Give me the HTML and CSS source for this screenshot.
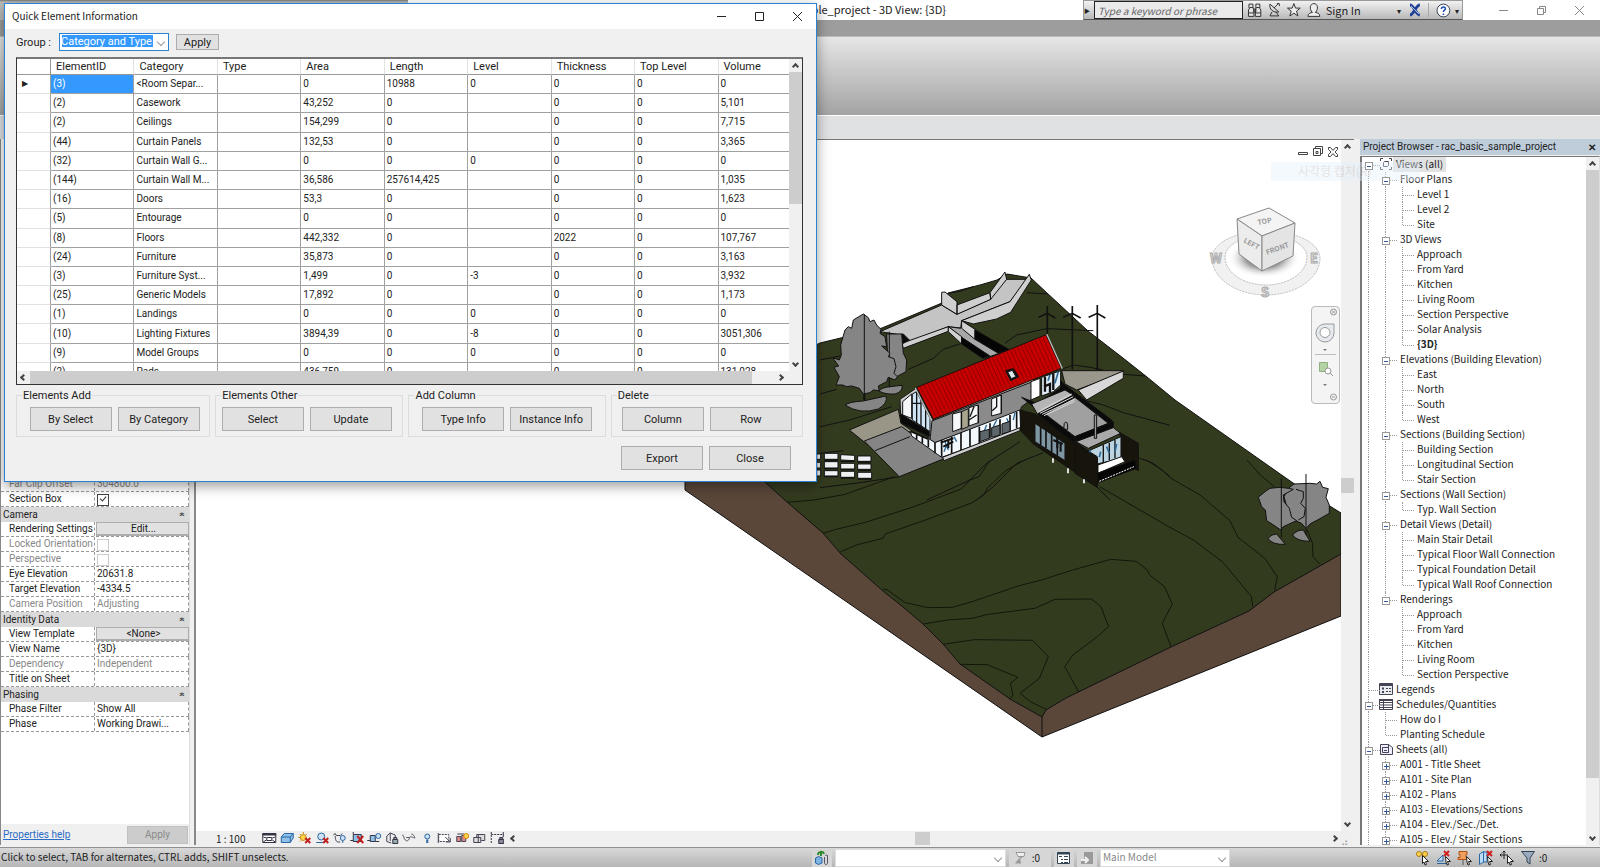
FILE: index.html
```html
<!DOCTYPE html>
<html lang="en">
<head>
  <meta charset="UTF-8" />
  <meta name="viewport" content="width=device-width, initial-scale=1.0"/>
  <title>rac_basic_sample_project - 3D View: {3D}</title>
  <link rel="stylesheet" href="styles.css">
</head>
<body>

  <!-- Application title bar -->
  <header class="titlebar">
    <div class="app-title">rac_basic_sample_project - 3D View: {3D}</div>
    <div class="infocenter">
      <span class="search-arrow">▶</span>
      <input type="text" class="search" placeholder="Type a keyword or phrase" aria-label="Search" />
      <svg width="16" height="16" viewBox="0 0 16 16" fill="#e4e4e4" stroke="#333"><path d="M2 6V2h4v4M9 6V2h4v4M1.500 14.500V8L3 5.500h3L7 8v6.500zM8.500 14.500V8l1-2.500h3L14 8v6.500zM7 7h2v3H7zM1.500 11H7M8.500 11H14"/></svg>
      <svg width="16" height="16" viewBox="0 0 16 16" fill="none" stroke="#333"><path d="M3 2c-1 5 3 9 9 8zM5 10l-2 4h9l-3-4M7 6l4-4M10 1.500h2.500V4"/></svg>
      <svg width="16" height="16" viewBox="0 0 16 16" fill="#eee" stroke="#333"><path d="M8 1.500l1.700 4.600h4.800l-3.800 3 1.400 5L8 11.200l-4.100 2.900 1.400-5-3.800-3h4.800z"/></svg>
      <svg width="16" height="16" viewBox="0 0 16 16" fill="#eee" stroke="#333"><path d="M2 14.500c0-3 2-3.500 4.500-4C3 7 4 1.500 8 1.500S13 7 9.500 10.500c2.500.5 4.500 1 4.500 4z"/></svg>
      <span class="sign-in">Sign In</span>
      <span class="caret">▾</span>
      <svg width="14" height="14" viewBox="0 0 14 14" fill="none" stroke="#1f3f94" stroke-width="3"><path d="M2 2c4 0 6 10 10 10M12 2C8 2 6 12 2 12"/><path d="M3 3l8 8" stroke="#b9d0f0" stroke-width="1"/></svg>
      <span class="divider"></span>
      <svg width="15" height="15" viewBox="0 0 15 15"><circle cx="7.500" cy="7.500" r="6.500" fill="#fff" stroke="#345"/><path d="M5.500 6c0-3 4.500-2.500 4 0-.3 1.200-2 1.300-2 3M7.500 10.500v1.500" fill="none" stroke="#1f4fb4" stroke-width="1.600"/></svg>
      <span class="caret">▾</span>
    </div>
    <div class="window-buttons">
      <button aria-label="Minimize"><svg width="11" height="11" viewBox="0 0 11 11"><path d="M1 5.500h9"/></svg></button>
      <button aria-label="Restore"><svg width="11" height="11" viewBox="0 0 11 11"><path d="M1.500 3.500h6v6h-6zM3.500 3.500v-2h6v6h-2"/></svg></button>
      <button aria-label="Close"><svg width="11" height="11" viewBox="0 0 11 11"><path d="M1 1l9 9M10 1l-9 9"/></svg></button>
    </div>
  </header>
  <div class="ribbon-tabs"></div>
  <div class="ribbon-panel"></div>
  <div class="options-bar"></div>

  <main class="workspace">

    <!-- Properties palette -->
    <aside class="properties">
      <div class="properties-head"></div>
      <div class="prop-row dim"><span>Far Clip Offset</span><span>304800.0</span></div>
      <div class="prop-row"><label for="sectionBox">Section Box</label><span><input type="checkbox" id="sectionBox" checked /></span></div>
      <div class="prop-group">Camera<span class="fold">»</span></div>
      <div class="prop-row"><span>Rendering Settings</span><button class="prop-btn">Edit...</button></div>
      <div class="prop-row dim"><label for="locked">Locked Orientation</label><span><input type="checkbox" id="locked" disabled /></span></div>
      <div class="prop-row dim"><label for="perspective">Perspective</label><span><input type="checkbox" id="perspective" disabled /></span></div>
      <div class="prop-row"><span>Eye Elevation</span><span>20631.8</span></div>
      <div class="prop-row"><span>Target Elevation</span><span>-4334.5</span></div>
      <div class="prop-row dim"><span>Camera Position</span><span>Adjusting</span></div>
      <div class="prop-group">Identity Data<span class="fold">»</span></div>
      <div class="prop-row"><span>View Template</span><button class="prop-btn">&lt;None&gt;</button></div>
      <div class="prop-row"><span>View Name</span><span>{3D}</span></div>
      <div class="prop-row dim"><span>Dependency</span><span>Independent</span></div>
      <div class="prop-row"><span>Title on Sheet</span><span></span></div>
      <div class="prop-group">Phasing<span class="fold">»</span></div>
      <div class="prop-row"><span>Phase Filter</span><span>Show All</span></div>
      <div class="prop-row"><span>Phase</span><span>Working Drawi...</span></div>
      <div class="properties-foot">
        <a href="#">Properties help</a>
        <button disabled>Apply</button>
      </div>
    </aside>

    <!-- 3D view -->
    <section class="view">
      <div class="view-main">
        <div class="canvas">
          <svg class="model" viewBox="196 140 1145 691" preserveAspectRatio="xMaxYMid slice">
            <!-- soil and ground -->
            <g stroke="#111" stroke-width="1">
              <path fill="#5a473a" d="M685 470V490L1042 737L1341 616V540L1042 700L760 470z"/>
              <path d="M1042 715V737"/>
              <path fill="#333b1f" d="M700 400L820 343L882 328L942 303L948 293L980 285L997 280L1007 274L1031 278L1047 293L1073 317L1088 331L1123 358L1147 377L1175 400L1293 483L1341 513V554L1274 592L1249 611L1171 647L1066 698L1046 710L1042 717L1010 699L960 664L943 644L923 624L903 607L883 591L841 554L823 533L787 502L765 482z"/>
            </g>
            <g class="contour" transform="translate(680 460) scale(.4464 .3333)">
              <path d="M240 127L300 120L370 103L480 50M320 220L350 208L415 187L520 142L630 87L650 60L670 50L695 0M360 275L395 255L455 235L460 222L550 180L655 128L680 105L690 82L730 32L772 0"/>
              <path d="M455 387L465 390L503 427L555 443L610 442L650 427L760 377L810 360L880 330L965 298L1022 304L1047 330L1052 345L1085 380L1103 432L1080 490L1100 560"/>
              <path d="M545 492L600 480L655 475L690 463L795 445L840 418L922 417L943 440L960 500L935 530L880 585L862 620L893 696"/>
              <path d="M590 553L660 539L790 541L825 590L805 655L762 700L785 725L820 748M628 613L688 614L757 652L740 670L746 705L740 716"/>
              <path d="M940 80L1095 200L1150 240L1215 305L1240 345L1280 410L1283 440M1045 0L1080 30L1100 55L1165 105L1232 182L1250 232L1310 295L1338 350L1332 392M1270 0L1300 45L1335 85M1405 210L1417 250L1418 290L1433 312"/>
            </g>

            <!-- house, roads and trees -->
            <g class="house" transform="translate(820 260) scale(.3333)">
              <path d="M0 300L60 288M0 402L50 388M0 500L90 480L215 440M0 580L70 572M265 328L340 295L370 268L425 250M555 250L590 225L680 206L820 212M790 420L850 435L910 458L1050 496M955 593L1000 610L1050 650M0 683L120 668L240 650M320 720L450 660L500 610L600 545M470 720L520 680L590 610L670 578M620 98L680 102M725 328L760 315L810 322L850 330M910 343L975 348M830 680L870 720M385 100L420 94L460 80"/>
              <path fill="#c4c4c4" d="M180 215L365 135L410 163L512 118L512 100L560 58L622 58L570 125L425 182L430 205L385 200L248 255L245 225z"/>
              <path fill="#cfcfcf" d="M365 97L375 96L411 125V163L365 135zM411 135L510 98L512 118L411 163zM510 98L555 36L560 58L512 118zM570 125L628 43L634 60L572 157L530 177L460 192L425 182zM245 250L385 200V214L250 265z"/>
              <path fill="#a8a8a8" d="M385 200L425 232L495 295L560 272L465 208L425 182L422 205z"/>
              <path fill="#d0d0d0" d="M385 200L425 230V252L385 215zM425 182L465 208V238L425 205z"/>
              <path fill="#050505" d="M425 232L510 288L488 295L425 252zM465 210L570 270L535 280L465 238z"/>
              <path fill="#0a0a0a" d="M220 225L250 222L268 240L250 250L225 238z"/>

              <path fill="#858585" d="M200 222L245 222L250 280L260 300L258 335L230 350L205 340zM177 393Q185 382 210 380L246 376Q250 395 225 402Q195 404 177 393M75 435Q90 425 130 423L198 408Q205 430 175 447Q120 465 75 435"/>
              <path d="M208 215V382" />
              <path fill="#858585" d="M130 162L145 173L150 185L162 180L170 195L183 208L180 220L195 230L200 260L185 258L210 280L205 290L222 296L228 320L222 340L232 350L225 360L205 352L200 365L175 378L178 392L160 390L150 398L130 402L118 385L95 378L80 380L68 375L48 375L58 350L42 322L56 318L38 293L58 300L64 285L62 255L75 210L85 200L95 205L100 180z"/>
              <path d="M133 163V420"/>
              <path stroke-width="6" d="M133 404V420"/>

              <path fill="#999687" d="M88 510L235 448L243 490L275 512L165 572z"/>
              <path fill="#858585" d="M133 543L245 500L375 595L238 650z"/>
              <path d="M165 572L270 530"/>

              <path fill="#eef0f2" d="M-10 582H2V598H-10zM13 580H54V598H13zM62 584L104 586V602L62 600zM113 588H153V604H113zM-10 607H2V624H-10zM13 605H54V624H13zM62 610H104V627H62zM113 612H153V628H113zM-10 630H2V648H-10zM13 632H54V648H13zM62 634H104V652H62zM113 637H155V655H113z"/>
              <path stroke-width="4" d="M13 600H54M62 604H104M113 606H153M13 626H54M62 629H104M113 631H153M13 650H54M62 654H104M113 657H155"/>

              <path fill="#9a988c" d="M725 332L910 332L890 345L770 390L735 372z"/>
              <path fill="#d8d8d8" d="M775 390L910 333V355L800 420z"/>

              <!-- gable end -->
              <path fill="#c9c9c9" d="M240 418L288 385L338 478V548L325 530L243 488z"/>
              <path fill="#f4f6f7" d="M248 425L275 402V475L248 465z"/>
              <path fill="#cfe4f4" d="M277 402L290 395L330 475V515L277 480z"/>
              <path stroke-width="4" d="M290 395V490M303 415V500M317 440V508M277 430H305"/>
              <path fill="#0a0a0a" d="M243 462L328 515V530L243 488z"/>
              <!-- roof -->
              <path fill="#c60000" d="M290 382L678 224L724 325L340 478z"/>
              <path stroke="#7a0000" d="M300 378L351 474M311 373L361 470M322 369L372 465M333 364L382 461M344 360L393 457M355 355L403 453M365 351L414 449M376 346L424 445M387 342L435 441M398 338L446 437M408 334L457 432M419 329L467 428M430 325L478 424M441 320L488 420M451 316L499 416M462 312L510 411M473 308L521 407M484 303L531 402M494 299L542 398M505 294L552 394M516 290L563 390M527 286L574 385M537 282L585 381M548 277L595 377M559 273L606 373M570 268L617 368M580 264L627 364M591 259L638 360M602 255L649 356M613 251L659 351M623 247L670 347M634 242L681 342M645 238L692 338M656 233L702 334M667 229L713 330"/>
              <path fill="none" stroke="#b9b9b9" stroke-width="4" d="M680 222L727 326M640 362L336 484L286 384"/>
              <path fill="#111" d="M557 332L580 326L596 350L572 362z"/>
              <path fill="#dce8ee" d="M563 336L577 331L588 350L574 356z"/>
              <!-- walls -->
              <path fill="#8a8a8a" d="M336 483L635 366V418L605 440L600 455L345 548L330 540z"/>
              <path fill="#f2f8fc" d="M345 548L600 450L605 505L365 592L275 528L272 515L325 535z"/>
              <path stroke-width="5" d="M290 525V538M307 528V550M325 538V562M345 548V580M365 540V590M395 530V580M423 518V570M450 508V560M478 500V550M510 490V535M540 478V522M570 465V515M590 456V505M275 515L325 538"/>
              <path stroke="#2d6a9a" stroke-width="4" d="M375 545L385 570M380 555L372 575M402 530L410 545M500 495L492 515M530 480L520 500M585 458L580 480M560 475L567 490"/>
              <path stroke-width="6" d="M362 548L400 535M370 560L400 545M385 540V565"/>
              <path fill="#5d666b" d="M480 515L508 508V535L480 545zM515 503L540 495V525L515 532zM546 492L570 484V515L546 522z"/>
              <path fill="#f5f7f8" d="M398 462L425 455V505L398 515zM447 443L475 435V488L447 498zM515 417L544 405V460L515 468z"/>
              <path fill="#a9a48d" d="M425 455L445 446V500L425 508z"/>
              <path stroke-width="4" d="M424 455V508M475 435V490M544 405V460M447 480L470 465M462 440L450 470M530 412V440L517 452"/>
              <path fill="#fff" d="M633 365L660 355V408L633 420z"/>
              <path fill="#e2eef5" d="M665 352L722 332V375L700 395L665 408z"/>
              <path stroke-width="7" d="M672 380L690 372L690 398M700 340V390M675 350V395"/>
              <path stroke="#2d6a9a" stroke-width="5" d="M715 335L705 370M690 345L684 362"/>
              <path fill="#d0d0d0" d="M368 592L600 503V512L372 602z"/>

              <!-- lower wing -->
              <path fill="#17140c" d="M600 450L645 462L832 592V682L640 552L602 512z"/>
              <path fill="#0a0a0a" d="M605 412L640 440L655 465L760 545L880 500L875 480L735 375L722 362V385L650 430z"/>
              <path fill="#b5b5b5" d="M635 432L735 390L760 405L652 462z"/>
              <path fill="#a0a0a0" d="M675 462L765 412L865 490L765 530z"/>
              <path stroke="#ddd" d="M655 455L755 402M660 460L760 410M667 463L764 418M672 467L764 424"/>
              <path fill="#0a0a0a" d="M765 530L880 485V500L800 545L770 545z"/>
              <path fill="#aaa" d="M768 545L880 503L902 520L805 565z"/>
              <path fill="#7e96a1" d="M645 490L735 550V602L645 545z"/>
              <path stroke-width="5" d="M662 500V555M678 512V565M695 522V576M712 535V588"/>
              <path stroke-width="6" d="M700 540L728 552M712 530V565M722 545V575"/>
              <path fill="#17140c" d="M900 518L955 550V632L918 610L905 598z"/>
              <path fill="#bcd4e0" d="M805 573L903 530V595L832 612V590z"/>
              <path fill="#fff" d="M834 615L905 590L915 605L834 640z"/>
              <path fill="#050505" d="M832 640L945 600L950 625L835 668z"/>
              <path stroke="#fff" stroke-width="3" stroke-dasharray="6 3" d="M838 664L942 620"/>
              <path stroke-width="4" d="M850 555V608M868 548V600M885 540V595"/>
              <path stroke="#2d6a9a" stroke-width="5" d="M812 570L806 585M842 575L838 592M860 560L868 580M890 552L885 575"/>
              <path fill="#17140c" d="M765 548L832 595V682L765 640z"/>
              <path fill="#999" d="M823 465H830V535H823z"/>
              <path d="M733 490Q740 480 743 495V508H731z"/>
              <path stroke="#fff" stroke-width="5" d="M699 595V608M744 625V640M792 658V670"/>

              <!-- wind turbines -->
              <path stroke-width="5" d="M682 138V222M757 138V328M832 135V330"/>
              <path stroke-width="5" d="M656 172L682 160L706 174M730 172L757 160L782 174M806 172L832 160L856 174"/>
            </g>

            <!-- trees on the right -->
            <g class="house" transform="translate(1160 400) scale(.3333)">
              <path fill="#858585" d="M402 252L450 250L470 252L480 244L488 262L505 266L498 292L508 315L508 340L480 356L450 372L438 386L425 370L400 360L390 355L372 290L385 265z"/>
              <path fill="#858585" d="M295 292L315 275L330 265L360 262L385 265L400 268L370 285L372 305L388 325L395 352L410 362L370 380L362 390L345 378L320 362L316 330L305 320z"/>
              <path d="M408 268L430 275V295L422 310L436 325L432 350L415 360"/>
              <path fill="#858585" d="M324 415Q335 402 350 402L376 433Q335 435 324 415M398 405Q410 390 430 390L450 424Q410 424 398 405"/>
              <path stroke-width="3" d="M364 235V412M438 222V405"/>
            </g>

            <!-- view cube -->
            <defs><radialGradient id="cubeShadow"><stop offset="0.500" stop-color="#999"/><stop offset="1" stop-color="#fff" stop-opacity="0"/></radialGradient></defs>
            <path fill="#f1f1f1" fill-rule="evenodd" stroke="#bbb" stroke-dasharray="2 1" d="M1212 258A54 27 0 0 1 1320 258A54 37 0 0 1 1212 258zM1225 257A41 22 0 0 1 1307 257A41 28 0 0 1 1225 257z"/>
            <ellipse cx="1264" cy="258" rx="36" ry="20" fill="url(#cubeShadow)"/>
            <g stroke="#888" stroke-width="1">
              <path fill="#f4f4f4" d="M1237 219L1269 208L1295 223L1262 236z"/>
              <path fill="#ececec" d="M1237 219L1262 236V271L1239 254z"/>
              <path fill="#e4e4e4" d="M1262 236L1295 223L1293 256L1262 271z"/>
            </g>
            <g class="cube-text">
              <text transform="translate(1258 225) rotate(-10)">TOP</text>
              <text transform="translate(1243 242) rotate(28)">LEFT</text>
              <text transform="translate(1267 255) rotate(-20)">FRONT</text>
            </g>
            <g class="compass-text"><text x="1210" y="263">W</text><text x="1310" y="263">E</text><text x="1261" y="297">S</text></g>
          </svg>
          <div class="view-buttons">
            <svg width="10" height="10" viewBox="0 0 10 10"><path d="M.5 5.500h9v2h-9z"/></svg>
            <svg width="10" height="11" viewBox="0 0 10 11"><path d="M.5 2.500h7v7h-7zM2.500 2.500v-2h7v7h-2M3 5.500h2v2H3z"/></svg>
            <svg width="10" height="10" viewBox="0 0 10 10"><path d="M.5.5h2L5 3.500 7.500.5h2v2L7 5l2.500 2.500v2h-2L5 6.500 2.500 9.500h-2v-2L3 5 .5 2.500z"/></svg>
          </div>
          <div class="nav-bar">
            <svg width="29" height="98" viewBox="0 0 29 98" fill="none" stroke="#999">
              <circle cx="22.500" cy="6" r="3"/><path d="M21 4.500l3 3M24 4.500l-3 3"/>
              <path fill="#e6eaee" d="M14 18h9v9a9 9 0 1 1-9-9z"/><circle cx="14" cy="26.500" r="5" fill="#fff"/>
              <path fill="#777" stroke="none" d="M12 43h4l-2 2zM12 78h4l-2 2z"/>
              <path stroke="#bbb" d="M4 48.500h21"/>
              <path fill="#b4d3a2" stroke="#8fae80" d="M8.500 56.500h8v9h-8z"/><circle cx="17" cy="65" r="3" fill="#fff"/><path d="M19 67l3 3"/>
              <circle cx="22.500" cy="91" r="3"/><path d="M21 91h3"/>
            </svg>
          </div>
        </div>
        <div class="vscroll view-vscroll"><i class="arrow up"></i><i class="thumb"></i><i class="arrow down"></i></div>
      </div>
      <div class="view-control">
        <span class="scale">1 : 100</span>
        <span class="control-icons">
          <svg viewBox="0 0 14 12"><path fill="#fff" stroke="#334" d="M.5 1.500h13v9H.5z"/><path stroke="#334" stroke-width="2" d="M0 2.500h14"/><path fill="#fff" stroke="#334" d="M4.500 5.500h5v3h-5zM1 5l3 1M13 5l-3 1M1 10l3-2M13 10l-3-2"/></svg>
          <svg viewBox="0 0 14 12"><path fill="#8fc0e8" stroke="#2b67a3" d="M1 5l3-3.500h9V6l-3 4.500H1zM1 5h9v5.500M10 5l3-3.500"/></svg>
          <svg viewBox="0 0 14 12"><circle cx="6" cy="5.500" r="3" fill="#ffd34d" stroke="#c98a12"/><path stroke="#c98a12" d="M6 0v2M1 5.500h2M2.500 2l1 1M9.500 2l-1 1M2.500 9.500l1-1"/><path stroke="#c02020" stroke-width="2" d="M8 6l5 5M13 6l-5 5"/></svg>
          <svg viewBox="0 0 14 12"><circle cx="6" cy="4.500" r="3.500" fill="#cfe2f5" stroke="#2b67a3"/><path stroke="#2b67a3" d="M1 10.500h8"/><path stroke="#c02020" stroke-width="2" d="M8 6l5 5M13 6l-5 5"/></svg>
          <svg viewBox="0 0 14 12"><path fill="#eee" stroke="#445" d="M1 3l2-1.500 1 2h4l2-2M3 4c0 4 1 6 3 6h2"/><circle cx="10.500" cy="6" r="2.500" fill="#cfe2f5" stroke="#2b67a3"/><path stroke="#2b67a3" d="M10.500 9v2"/></svg>
          <svg viewBox="0 0 14 12"><path fill="#8fc0e8" stroke="#334" d="M3 2.500h8v7H3zM0 8.500h3M3 0v2"/><path stroke="#c02020" stroke-width="2" d="M7 4l6 7M13 4l-6 7"/></svg>
          <svg viewBox="0 0 14 12"><path fill="#8fc0e8" stroke="#334" d="M3 3.500h5v6H3zM0 8.500h3M8 9.500h4"/><circle cx="11" cy="4" r="2.500" fill="#cfe2f5" stroke="#2b67a3"/></svg>
          <svg viewBox="0 0 14 12"><path fill="#eee" stroke="#445" d="M1.500 9.500V4L5 1l5 2v3M5 1v8M1.500 9.500L6 11"/><path fill="#9aa" stroke="#334" d="M7.500 7.500h5v4h-5zM8.500 7V5.500h3V7"/></svg>
          <svg viewBox="0 0 14 12"><path stroke="#556" d="M0 3c2 0 1 3 3 5s4 0 4-2 4-1 5 0 1-3-3-4M4 5.500h3"/></svg>
          <svg viewBox="0 0 14 12"><circle cx="7" cy="4.500" r="2.500" fill="#cfe2f5" stroke="#2b67a3"/><path stroke="#2b67a3" stroke-width="2" d="M7 7.500V11"/></svg>
          <svg viewBox="0 0 14 12"><path fill="#fff" stroke="#445" stroke-dasharray="2 1" d="M1.500 2.500h10v7h-10z"/><path stroke="#445" d="M1 1v10M8 5l5 5M13 6v4H9"/></svg>
          <svg viewBox="0 0 14 12"><path fill="#d88" stroke="#445" d="M1.500 4.500h4v5h-4zM6.500 3.500h4v6h-4zM2 2h7"/><circle cx="11" cy="4" r="2.500" fill="#ffd34d" stroke="#d98a12"/></svg>
          <svg viewBox="0 0 14 12"><path fill="#ddd" stroke="#445" d="M1.500 5.500h7v5h-7zM4.500 5V2.500h8v6H9M6 2.500v8"/></svg>
          <svg viewBox="0 0 14 12"><path stroke="#334" stroke-dasharray="2 1" d="M1 2.500h12M1 0v11"/><path stroke="#334" d="M13 0v5"/><path fill="#889" stroke="#334" d="M8.500 7.500h5v4h-5zM9.500 7V5.500h3V7"/></svg>
        </span>
        <div class="hscroll"><i class="arrow left"></i><i class="thumb"></i><i class="arrow right"></i></div>
        <span class="grip">⣠</span>
      </div>
    </section>

    <!-- Project browser -->
    <aside class="browser">
      <div class="browser-title">Project Browser - rac_basic_sample_project<button aria-label="Close">✕</button></div>
      <div class="browser-body">
        <div class="tree" id="tree"></div>
        <div class="vscroll"><i class="arrow up"></i><i class="thumb"></i><i class="arrow down"></i></div>
      </div>
    </aside>
    <div class="ghost-menu">사각형 캡처(R)</div>
  </main>

  <!-- Status bar -->
  <footer class="statusbar">
    <div class="message">Click to select, TAB for alternates, CTRL adds, SHIFT unselects.</div>
    <div class="status-tools">
      <span class="cell"><svg width="16" height="16" viewBox="0 0 16 16" fill="none"><path fill="#7db4e4" stroke="#2b67a3" d="M1.500 8l3-1.500L8 8v5l-3.500 1.500-3-1.500z"/><path stroke="#2c8a2c" stroke-width="2" d="M4 5c0-4 5-4 6-1M7 1v5"/><path stroke="#556" d="M10.500 7v6c0 2 3 2 3 0V6c0-1.500-2-1.500-2 0"/></svg></span>
      <span class="combo workset"><select aria-label="Active workset"><option></option></select></span>
      <span class="cell wide"><svg width="14" height="14" viewBox="0 0 14 14"><path fill="#eee" stroke="#999" d="M3 1.500h9l-1 4H5z"/><path fill="#999" d="M7 6l-5 6.500h6zM6 5h4L7 9z"/></svg>:0</span>
      <span class="cell"><svg width="16" height="14" viewBox="0 0 16 14" fill="#fff" stroke="#345"><path d="M1.500 1.500h12v11h-12z"/><path stroke-width="2" d="M1 2.500h13"/><path d="M3 5.500h3M5 8.500h2M5 11.500h2M8 5.500h4M8 8.500h4M8 11.500h4"/></svg></span>
      <span class="cell"><svg width="14" height="14" viewBox="0 0 14 14"><path fill="#999" d="M4 1h9v12H1V8h3z"/><path fill="none" stroke="#eee" stroke-width="2" d="M1 9h7M5 6l3 3-3 3"/></svg></span>
      <span class="combo option"><select aria-label="Design option"><option>Main Model</option></select></span>
      <span class="select-icons">
        <svg viewBox="0 0 16 16"><circle cx="4" cy="4" r="2.500" fill="#ffd34d" stroke="#a87b10"/><circle cx="10" cy="4" r="2.500" fill="#ffd34d" stroke="#a87b10"/><path fill="#fff" stroke="#222" d="M7.500 5.500l6 6h-3l1 3-1.500.5-1-3-1.500 1.500z"/></svg>
        <svg viewBox="0 0 16 16"><path fill="#bcdcf5" stroke="#2b67a3" d="M1 11L7 5v6zM1 13.500h9"/><path stroke="#d02020" stroke-width="2" d="M8 1l5 5M13 1L8 6"/><path fill="#fff" stroke="#222" d="M9.500 6.500l5 5h-3l1 3-1.500.5-1-3z"/></svg>
        <svg viewBox="0 0 16 16"><path fill="#f0a060" stroke="#b05010" d="M2 1.500h8v3H9v3h2v2H1v-2h2v-3H2z"/><path stroke="#555" d="M6 10v5"/><path fill="#fff" stroke="#222" d="M9.500 6.500l5 5h-3l1 3-1.500.5-1-3z"/></svg>
        <svg viewBox="0 0 16 16"><path fill="#bcdcf5" stroke="#2b67a3" d="M1.500 4l4-2.500V12l-4 2.500zM5.500 2H9v10H5"/><path stroke="#d02020" stroke-width="2" d="M9 1l5 5M14 1L9 6"/><path fill="#fff" stroke="#222" d="M9.500 6.500l5 5h-3l1 3-1.500.5-1-3z"/></svg>
        <svg viewBox="0 0 16 16"><path stroke="#222" d="M5 1v8M1 5h8M3.500 2.500L5 1l1.500 1.500M2.500 3.500L1 5l1.500 1.500"/><path fill="#fff" stroke="#222" d="M8.500 5.500l6 6h-3l1 3-1.500.5-1-3-1.500 1.500z"/></svg>
        <svg viewBox="0 0 16 16"><path fill="#9aabbf" stroke="#345" d="M1.500 1.500h13L10 8v6l-3-2V8z"/></svg>
      </span>
      <span class="count">:0</span>
    </div>
  </footer>

  <!-- Quick Element Information dialog -->
  <div class="dialog" role="dialog" aria-labelledby="dialogTitle">
    <div class="dialog-title">
      <span id="dialogTitle">Quick Element Information</span>
      <div class="window-buttons">
        <button aria-label="Minimize"><svg width="11" height="11" viewBox="0 0 11 11"><path d="M1 5.500h9"/></svg></button>
        <button aria-label="Maximize"><svg width="11" height="11" viewBox="0 0 11 11"><path d="M1.500 1.500h8v8h-8z"/></svg></button>
        <button aria-label="Close"><svg width="11" height="11" viewBox="0 0 11 11"><path d="M1 1l9 9M10 1l-9 9"/></svg></button>
      </div>
    </div>
    <div class="dialog-body">
      <div class="group-line">
        <label for="group">Group :</label>
        <span class="combo group-combo"><select id="group"><option>Category and Type</option></select></span>
        <button class="apply">Apply</button>
      </div>

      <div class="grid">
        <div class="grid-main">
          <div class="grid-view">
            <table>
              <thead><tr><th></th><th>ElementID</th><th>Category</th><th>Type</th><th>Area</th><th>Length</th><th>Level</th><th>Thickness</th><th>Top Level</th><th>Volume</th></tr></thead>
              <tbody id="elements"></tbody>
            </table>
          </div>
          <div class="vscroll"><i class="arrow up"></i><i class="thumb"></i><i class="arrow down"></i></div>
        </div>
        <div class="hscroll"><i class="arrow left"></i><i class="thumb"></i><i class="arrow right"></i></div>
      </div>

      <div class="groups">
        <fieldset class="add"><legend>Elements Add</legend><button>By Select</button><button>By Category</button></fieldset>
        <fieldset class="other"><legend>Elements Other</legend><button>Select</button><button>Update</button></fieldset>
        <fieldset><legend>Add Column</legend><button>Type Info</button><button>Instance Info</button></fieldset>
        <fieldset><legend>Delete</legend><button>Column</button><button>Row</button></fieldset>
      </div>
      <div class="dialog-actions"><button>Export</button><button>Close</button></div>
    </div>
  </div>

  <script src="script.js"></script>
</body>
</html>
```
FILE: styles.css
```css
* {
  margin: 0;
  padding: 0;
  box-sizing: border-box;
}

body {
  display: flex;
  flex-direction: column;
  height: 100vh;
  overflow: hidden;
  position: relative;
  background: #f0f0f0;
  color: #222;
  font-family: 'Noto Sans CJK KR', 'Open Sans', sans-serif;
  font-size: 10px;
  line-height: 15px;
}

button,
input,
select {
  font: inherit;
  color: inherit;
}

/* title bar */
.titlebar {
  display: flex;
  height: 20px;
  flex: none;
  background: linear-gradient(#777, #bbb 2px) 0 0 / 408px 100% no-repeat, #fff;
  font-size: 11px;
}

.app-title {
  flex: 1;
  padding-right: 137px;
  line-height: 18px;
  text-align: right;
}

.infocenter {
  display: flex;
  align-items: center;
  gap: 4px;
  width: 380px;
  background: linear-gradient(#f2f2f2, #b8b8b8);
  border: 1px solid #999;
  border-bottom-color: #555;
}

.search-arrow {
  width: 6px;
  font-size: 6px;
  text-align: center;
}

.search {
  width: 151px;
  height: 18px;
  padding: 0 3px;
  background: #eaeaea;
  border: 1px solid #222;
  font-size: 10px;
  font-style: italic;
}

.search::placeholder {
  color: #666;
}

.sign-in {
  width: 68px;
}

.caret {
  width: 7px;
  font-size: 8px;
}

.divider {
  width: 1px;
  height: 14px;
  margin: 0 3px;
  background: #aaa;
}

.window-buttons {
  display: flex;
  justify-content: space-around;
  width: 137px;
  padding: 0 1px 0 21px;
}

.window-buttons button {
  display: flex;
  align-items: center;
  padding: 0;
  background: none;
  border: none;
}

.window-buttons svg {
  fill: none;
  stroke: #888;
}

.ribbon-tabs {
  height: 16px;
  flex: none;
  background: #9d9d9d;
}

.ribbon-panel {
  height: 80px;
  flex: none;
  background: linear-gradient(#e6e6e6, #a3a3a3);
  border-top: 1px solid #bbb;
  border-bottom: 1px solid #fff;
}

.options-bar {
  height: 23px;
  flex: none;
  background: #dfe1e2;
}

/* workspace */
.workspace {
  position: relative;
  display: flex;
  flex: 1;
  min-height: 0;
  padding-bottom: 2px;
}

/* properties palette */
.properties {
  display: flex;
  flex-direction: column;
  width: 190px;
  margin-right: 4px;
  flex: none;
  background: #fff;
  border-left: 1px solid #888;
  border-right: 1px solid #ddd;
  font-family: Roboto, 'Noto Sans CJK KR', sans-serif;
}

.properties-head {
  height: 338px;
  flex: none;
}

.prop-row {
  display: grid;
  grid-template-columns: 94px 94px;
  height: 15px;
  flex: none;
  line-height: 14px;
  white-space: nowrap;
  border-bottom: 1px dashed #999;
}

.prop-row > * {
  height: 14px;
}

.prop-row > :first-child {
  padding-left: 8px;
  border-right: 1px dashed #999;
}

.prop-row > :last-child {
  padding-left: 2px;
  border-right: 1px dashed #999;
}

.dim {
  color: #888;
}

.prop-group {
  display: flex;
  justify-content: space-between;
  height: 15px;
  flex: none;
  padding: 0 5px 0 2px;
  background: #dadada;
}

.fold {
  transform: rotate(-90deg);
}

.prop-row .prop-btn {
  margin-left: 1px;
  line-height: 11px;
  text-align: center;
  background: #e1e1e1;
  border: 1px solid #adadad;
  border-bottom-width: 2px;
}

.prop-row input {
  appearance: none;
  display: block;
  width: 12px;
  height: 12px;
  margin-top: 2px;
  background: #fff;
  border: 1px solid #ccc;
}

.prop-row input:checked {
  border-color: #444;
}

.prop-row input:checked::before {
  content: '';
  display: block;
  width: 3px;
  height: 5px;
  margin: 0 0 0 3px;
  border: solid #333;
  border-width: 0 1px 1px 0;
  transform: rotate(40deg);
}

.properties-foot {
  display: flex;
  align-items: center;
  justify-content: space-between;
  height: 21px;
  margin-top: auto;
  padding: 0 1px 0 2px;
  background: #f0f0f0;
}

.properties-foot a {
  color: #2b6cc4;
}

.properties-foot button {
  width: 61px;
  height: 18px;
  line-height: 16px;
  color: #8a8a8a;
  background: #ccc;
  border: 1px solid #c0c0c0;
}

/* 3D view */
.view {
  display: flex;
  flex-direction: column;
  flex: 1;
  min-width: 0;
  margin-right: 6px;
  border-left: 2px solid #888;
  border-top: 1px solid #777;
}

.view-main {
  display: flex;
  flex: 1;
  min-height: 0;
}

.canvas {
  position: relative;
  flex: 1;
  min-width: 0;
  background: #fff;
}

.model {
  display: block;
  position: absolute;
  width: 100%;
  height: 100%;
}

.contour path {
  fill: none;
  stroke: #12160a;
  vector-effect: non-scaling-stroke;
}

.house path:not([stroke]) {
  stroke: #111;
}

.house path:not([stroke-width]) {
  stroke-width: 3;
}

.house path:not([fill]) {
  fill: none;
}

.house path[stroke='#7a0000'] {
  stroke-width: 2;
}

.cube-text {
  fill: #999;
  font-size: 7px;
  font-weight: bold;
}

.compass-text {
  fill: #e4e4e4;
  stroke: #aaa;
  font-size: 13px;
  font-weight: bold;
}

.view-buttons {
  position: absolute;
  top: 6px;
  right: 3px;
  display: flex;
  gap: 5px;
  align-items: center;
}

.view-buttons svg {
  fill: #fff;
  stroke: #444;
}

.nav-bar {
  position: absolute;
  top: 166px;
  right: 1px;
  background: #f4f4f4;
  border-radius: 4px;
  outline: 1px solid #bbb;
  outline-offset: -1px;
}

.nav-bar svg {
  display: block;
}

.view-control {
  display: flex;
  align-items: center;
  height: 14px;
  padding-left: 20px;
  background: #efefef;
}

.scale {
  width: 46px;
}

.control-icons {
  display: flex;
  gap: 3px;
  width: 242px;
  margin-right: 3px;
}

.control-icons svg {
  width: 14px;
  height: 12px;
  flex: 1;
  fill: none;
}

/* scroll bars */
.vscroll,
.hscroll {
  display: flex;
  background: #f0f0f0;
}

.vscroll {
  flex-direction: column;
  width: 13px;
  flex: none;
}

.hscroll {
  height: 13px;
}

.thumb {
  background: #cdcdcd;
}

.arrow {
  display: flex;
  align-items: center;
  justify-content: center;
  width: 13px;
  height: 13px;
  flex: none;
}

.arrow::before {
  content: '';
  box-sizing: border-box;
  width: 5px;
  height: 5px;
  border: solid #444;
  border-width: 2px 0 0 2px;
}

.arrow.up::before { transform: translateY(1px) rotate(45deg); }
.arrow.down::before { transform: translateY(-1px) rotate(225deg); }
.arrow.left::before { transform: rotate(-45deg); }
.arrow.right::before { transform: rotate(135deg); }

.arrow.down {
  margin-top: auto;
}

.arrow.right {
  margin-left: auto;
}

.view-vscroll .thumb {
  height: 15px;
  margin-top: 325px;
}

.view-control .hscroll {
  flex: 1;
}

.view-control .thumb {
  width: 15px;
  margin-left: 395px;
}

.grip {
  width: 13px;
  color: #999;
}

/* project browser */
.browser {
  display: flex;
  flex-direction: column;
  width: 240px;
  flex: none;
}

.browser-title {
  display: flex;
  justify-content: space-between;
  height: 16px;
  margin-bottom: 1px;
  padding: 0 4px 0 3px;
  background: #bfcddb;
  font-family: Roboto, 'Noto Sans CJK KR', sans-serif;
  white-space: nowrap;
}

.browser-title button {
  background: none;
  border: none;
  font-weight: bold;
}

.browser-body {
  display: flex;
  flex: 1;
  min-height: 0;
  background: #fff;
  border: solid #777;
  border-width: 1px 1px 0 2px;
  border-right-color: #ddd;
}

.tree {
  flex: 1;
  overflow: hidden;
}

.tree-row {
  display: flex;
  height: 15px;
  line-height: 14px;
  white-space: nowrap;
}

.tree-row .label {
  padding-left: 4px;
}

.tree-row svg + .label {
  padding: 0 3px 0 3px;
}

.tree-row svg {
  width: 14px;
  height: 14px;
  fill: none;
  stroke: #445;
}

.label.current {
  background: #e2e2e2;
}

.label.active {
  font-weight: bold;
}

.guide {
  position: relative;
  width: 17px;
  flex: none;
}

.guide.line::before {
  content: '';
  position: absolute;
  left: 6px;
  top: 0;
  height: 15px;
  border-left: 1px dotted #999;
}

.guide.end::before {
  height: 8px;
}

.guide.first::before {
  top: 8px;
  height: 7px;
}

.guide.own::after {
  content: '';
  position: absolute;
  left: 7px;
  right: -1px;
  top: 8px;
  border-top: 1px dotted #999;
}

.toggle {
  position: absolute;
  left: 3px;
  top: 5px;
  z-index: 1;
  width: 8px;
  height: 8px;
  background: linear-gradient(#35589a, #35589a) 1px 3px / 4px 1px no-repeat, #fff;
  border: 1px solid #999;
}

.toggle.closed {
  background: linear-gradient(#35589a, #35589a) 1px 3px / 5px 1px no-repeat,
    linear-gradient(#35589a, #35589a) 3px 1px / 1px 5px no-repeat, #fff;
}

.browser .thumb {
  height: 608px;
}

.ghost-menu {
  position: absolute;
  top: 23px;
  right: 180px;
  width: 149px;
  height: 19px;
  padding-left: 27px;
  font-size: 12px;
  line-height: 18px;
  color: #bbb;
  background: #e6f1fc;
  opacity: 0.4;
}

/* status bar */
.statusbar {
  display: flex;
  height: 20px;
  flex: none;
  background: linear-gradient(#d8d8d8, #b6b6b6);
  border-top: 1px solid #8f8f8f;
  line-height: 18px;
}

.message {
  flex: 1;
  padding-left: 1px;
  white-space: nowrap;
}

.status-tools {
  display: flex;
  gap: 3px;
  width: 788px;
  flex: none;
  padding-top: 1px;
}

.cell {
  display: flex;
  align-items: center;
  justify-content: center;
  width: 20px;
  background: #d6d6d6;
}

.cell.wide {
  justify-content: space-between;
  width: 42px;
  padding: 0 11px 0 4px;
}

.combo {
  position: relative;
  display: block;
}

.combo select {
  display: block;
  appearance: none;
  width: 100%;
  height: 100%;
  padding-left: 2px;
  color: #888;
  background: #fff;
  border: 1px solid #ddd;
  border-radius: 0;
}

.combo::after {
  content: '';
  position: absolute;
  right: 5px;
  top: 6px;
  width: 5px;
  height: 5px;
  border: solid #999;
  border-width: 0 1px 1px 0;
  transform: rotate(45deg);
}

.status-tools .combo select {
  padding-bottom: 3px;
  line-height: 14px;
}

.workset {
  width: 171px;
}

.option {
  width: 130px;
}

.select-icons {
  display: flex;
  gap: 5px;
  align-items: center;
  margin-left: auto;
}

.select-icons svg {
  width: 16px;
  height: 16px;
  fill: none;
}

.count {
  width: 61px;
}

/* dialog */
.dialog {
  position: absolute;
  left: 4px;
  top: 3px;
  width: 813px;
  background: #f0f0f0;
  border: 1px solid #2b82d2;
  box-shadow: 0 4px 12px rgba(0, 0, 0, 0.4);
}

.dialog-title {
  display: flex;
  justify-content: space-between;
  height: 25px;
  padding-left: 7px;
  line-height: 24px;
  background: #fff;
}

.dialog-title .window-buttons {
  width: 114px;
  padding: 0;
}

.dialog-title .window-buttons svg {
  stroke: #222;
}

.dialog-body {
  padding: 4px 13px 11px 11px;
  font-family: Roboto, sans-serif;
  font-size: 11px;
  color: #222;
}

.group-line {
  display: flex;
  align-items: center;
  height: 18px;
  margin-bottom: 6px;
}

.group-line label {
  width: 43px;
}

.group-combo {
  width: 110px;
  height: 18px;
  margin-right: 7px;
}

.group-combo select {
  padding: 0 0 2px 1px;
  line-height: 13px;
  color: #fff;
  background: linear-gradient(#3399ff, #3399ff) 2px 1px / 91px 12px no-repeat, #fff;
  border-color: #2b82d2;
}

.dialog button {
  background: #e1e1e1;
  border: 1px solid #adadad;
}

.dialog .window-buttons button {
  background: none;
  border: none;
}

.apply {
  width: 43px;
  height: 16px;
  line-height: 13px;
}

.grid {
  border: 1px solid #333;
  border-top: 2px solid #777;
}

.grid-main {
  display: flex;
  height: 312px;
}

.grid-view {
  flex: 1;
  overflow: hidden;
  background: #fff;
}

.grid table {
  table-layout: fixed;
  width: 785px;
  height: 323px;
  border-collapse: separate;
  border-spacing: 0;
}

.grid th {
  height: 16px;
  padding-left: 5px;
  font-weight: normal;
  line-height: 15px;
  text-align: left;
  border-right: 1px solid #e2e2e2;
  border-bottom: 1px solid #999;
}

.grid th:first-child {
  width: 34px;
  border-right-color: #999;
}

.grid td {
  padding: 0 0 1px 2px;
  font-size: 10px;
  line-height: 15px;
  white-space: nowrap;
  border-right: 1px solid #a0a0a0;
  border-bottom: 1px solid #a0a0a0;
}

.grid td:first-child {
  padding-left: 5px;
  font-size: 8px;
  border-bottom-color: #e2e2e2;
}

.grid .selected {
  color: #fff;
  background: #3399ff;
}

.grid-main .thumb {
  height: 132px;
}

.grid .hscroll .thumb {
  width: 722px;
}

.grid .hscroll .arrow.right {
  margin-right: 15px;
}

.groups {
  display: grid;
  grid-template-columns: 194fr 188fr 197fr 192fr;
  gap: 5px;
  margin: 3px 0 9px;
}

.groups fieldset {
  display: flex;
  justify-content: center;
  gap: 6px;
  height: 49px;
  padding-top: 4px;
  border: 1px solid #dcdcdc;
}

.groups .add {
  padding-left: 3px;
}

.groups .other {
  padding-right: 5px;
}

.groups legend {
  margin-left: 5px;
  padding: 0 1px;
}

.groups .add legend {
  margin-left: 2px;
}

.groups button,
.dialog-actions button {
  width: 82px;
  height: 24px;
}

.dialog-actions {
  display: flex;
  justify-content: flex-end;
  gap: 6px;
  padding-right: 12px;
}
```
FILE: script.js
```js
// ElementID, Category, Type, Area, Length, Level, Thickness, Top Level, Volume
const elements = [
  ["(3)", "<Room Separ...", "", "0", "10988", "0", "0", "0", "0"],
  ["(2)", "Casework", "", "43,252", "0", "", "0", "0", "5,101"],
  ["(2)", "Ceilings", "", "154,299", "0", "", "0", "0", "7,715"],
  ["(44)", "Curtain Panels", "", "132,53", "0", "", "0", "0", "3,365"],
  ["(32)", "Curtain Wall G...", "", "0", "0", "0", "0", "0", "0"],
  ["(144)", "Curtain Wall M...", "", "36,586", "257614,425", "", "0", "0", "1,035"],
  ["(16)", "Doors", "", "53,3", "0", "", "0", "0", "1,623"],
  ["(5)", "Entourage", "", "0", "0", "", "0", "0", "0"],
  ["(8)", "Floors", "", "442,332", "0", "", "2022", "0", "107,767"],
  ["(24)", "Furniture", "", "35,873", "0", "", "0", "0", "3,163"],
  ["(3)", "Furniture Syst...", "", "1,499", "0", "-3", "0", "0", "3,932"],
  ["(25)", "Generic Models", "", "17,892", "0", "", "0", "0", "1,173"],
  ["(1)", "Landings", "", "0", "0", "0", "0", "0", "0"],
  ["(10)", "Lighting Fixtures", "", "3894,39", "0", "-8", "0", "0", "3051,306"],
  ["(9)", "Model Groups", "", "0", "0", "0", "0", "0", "0"],
  ["(2)", "Pads", "", "436,759", "0", "", "0", "0", "131,028"]
];

const tbody = document.getElementById("elements");
elements.forEach((row, r) => {
  const tr = tbody.insertRow();
  tr.insertCell().textContent = r === 0 ? "▶" : "";
  row.forEach((value, c) => {
    const td = tr.insertCell();
    td.textContent = value;
    if (r === 0 && c === 0) td.className = "selected";
  });
});

// depth, label, state: "-" open, "+" closed, "" leaf
const nodes = [
  [0, "Views (all)", "-", "views"],
  [1, "Floor Plans", "-"], [2, "Level 1"], [2, "Level 2"], [2, "Site"],
  [1, "3D Views", "-"], [2, "Approach"], [2, "From Yard"], [2, "Kitchen"], [2, "Living Room"],
  [2, "Section Perspective"], [2, "Solar Analysis"], [2, "{3D}"],
  [1, "Elevations (Building Elevation)", "-"], [2, "East"], [2, "North"], [2, "South"], [2, "West"],
  [1, "Sections (Building Section)", "-"], [2, "Building Section"], [2, "Longitudinal Section"], [2, "Stair Section"],
  [1, "Sections (Wall Section)", "-"], [2, "Typ. Wall Section"],
  [1, "Detail Views (Detail)", "-"], [2, "Main Stair Detail"], [2, "Typical Floor Wall Connection"],
  [2, "Typical Foundation Detail"], [2, "Typical Wall Roof Connection"],
  [1, "Renderings", "-"], [2, "Approach"], [2, "From Yard"], [2, "Kitchen"], [2, "Living Room"], [2, "Section Perspective"],
  [0, "Legends", "", "legends"],
  [0, "Schedules/Quantities", "-", "schedules"], [1, "How do I"], [1, "Planting Schedule"],
  [0, "Sheets (all)", "-", "sheets"],
  [1, "A001 - Title Sheet", "+"], [1, "A101 - Site Plan", "+"], [1, "A102 - Plans", "+"],
  [1, "A103 - Elevations/Sections", "+"], [1, "A104 - Elev./Sec./Det.", "+"], [1, "A105 - Elev./ Stair Sections", "+"]
];

const icons = {
  views: '<path d="M1.500 4V1.500H4M10 1.500h2.500V4M1.500 10v2.500H4M10 12.500h2.500V10M4.500 5.500l1-1h4v4l-1 1h-4z"/>',
  legends: '<path fill="#e8ebf0" d="M.5 1.500h13v11H.5z"/><path stroke-width="2" d="M1 3h12M3 6.500h2M3 10h2"/><path d="M7 6.500h2M10 6.500h2M7 9.500h2M10 9.500h2"/>',
  schedules: '<path fill="#fff" d="M.5 2.500h13v10H.5zM.5 5.500h13M.5 8h13M.5 10.500h13M4.500 2.500v10"/><path stroke-width="2" d="M0 3h14"/>',
  sheets: '<path fill="#eef" d="M1.500 2.500h8l4 3v7h-12z"/><path d="M3.500 5.500h6v5h-6zM9.500 2.500v8M5 8.500h3"/>'
};

// true when another node of this depth follows before the branch closes
function continues(index, depth) {
  for (let i = index + 1; i < nodes.length; i++) {
    if (nodes[i][0] < depth) return false;
    if (nodes[i][0] === depth) return true;
  }
  return depth < 2;
}

const tree = document.getElementById("tree");
nodes.forEach(([depth, label, state, icon], i) => {
  const row = document.createElement("div");
  row.className = "tree-row";
  for (let d = 0; d <= depth; d++) {
    const guide = document.createElement("span");
    const more = continues(i, d);
    guide.className = "guide";
    if (more || d === depth) guide.classList.add("line");
    if (d === depth) guide.classList.add("own");
    if (d === depth && !more) guide.classList.add("end");
    if (i === 0) guide.classList.add("first");
    if (d === depth && state) {
      const toggle = document.createElement("button");
      toggle.className = state === "+" ? "toggle closed" : "toggle";
      toggle.setAttribute("aria-label", "Toggle " + label);
      guide.appendChild(toggle);
    }
    row.appendChild(guide);
  }
  if (icon) row.insertAdjacentHTML("beforeend", '<svg viewBox="0 0 14 14">' + icons[icon] + "</svg>");
  const text = document.createElement("span");
  text.className = "label";
  if (i === 0) text.classList.add("current");
  if (label === "{3D}") text.classList.add("active");
  text.textContent = label;
  row.appendChild(text);
  tree.appendChild(row);
});
```
